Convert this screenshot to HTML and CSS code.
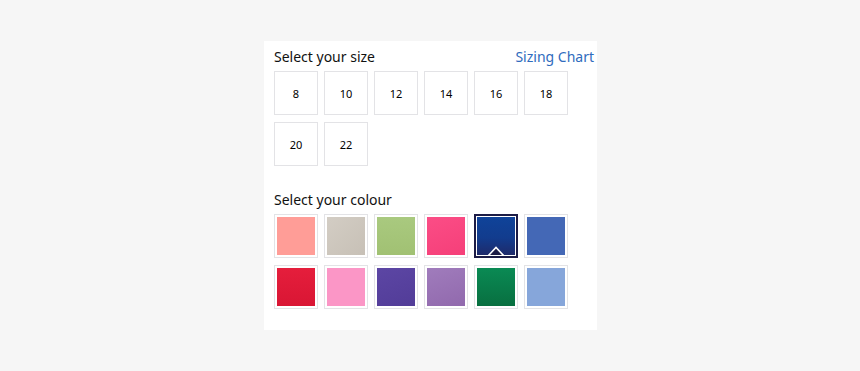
FILE: index.html
```html
<!DOCTYPE html>
<html lang="en">
<head>
  <meta charset="UTF-8" />
  <title>Select size and colour</title>
  <link rel="stylesheet" href="styles.css">
</head>
<body>
  <div class="panel">
    <div class="head">
      <span>Select your size</span>
      <a href="#" class="chart">Sizing Chart</a>
    </div>
    <div class="grid">
      <button class="size">8</button>
      <button class="size">10</button>
      <button class="size">12</button>
      <button class="size">14</button>
      <button class="size">16</button>
      <button class="size">18</button>
      <button class="size">20</button>
      <button class="size">22</button>
    </div>

    <div class="head head-colour">
      <span>Select your colour</span>
    </div>
    <div class="grid">
      <div class="swatch"><div class="fill c-salmon"></div></div>
      <div class="swatch"><div class="fill c-stone"></div></div>
      <div class="swatch"><div class="fill c-lime"></div></div>
      <div class="swatch"><div class="fill c-fuchsia"></div></div>
      <div class="swatch selected">
        <div class="fill c-navy">
          <svg class="notch" width="18" height="10" viewBox="0 0 18 10">
            <path d="M1 10 L9 1.5 L17 10" fill="#1c1c46" stroke="#fff" stroke-width="1.6" />
          </svg>
        </div>
      </div>
      <div class="swatch"><div class="fill c-royal"></div></div>
      <div class="swatch"><div class="fill c-red"></div></div>
      <div class="swatch"><div class="fill c-pink"></div></div>
      <div class="swatch"><div class="fill c-purple"></div></div>
      <div class="swatch"><div class="fill c-lilac"></div></div>
      <div class="swatch"><div class="fill c-green"></div></div>
      <div class="swatch"><div class="fill c-sky"></div></div>
    </div>
  </div>
</body>
</html>
```

FILE: styles.css
```css
body {
  margin: 0;
  background-color: #f6f6f6;
  font-family: 'Noto Sans', sans-serif;
  color: #111;
}
.panel {
  margin: 41px 0 0 264px;
  width: 320px;
  height: 264px;
  padding: 5px 3px 20px 10px;
  background: #fff;
}
.head {
  display: flex;
  justify-content: space-between;
  align-items: center;
  height: 20px;
  font-size: 14px;
  margin-bottom: 5px;
}
.head-colour {
  margin-top: 23px;
}
.chart {
  color: #2f6bbd;
  text-decoration: none;
}
.grid {
  display: grid;
  grid-template-columns: repeat(6, 44px);
  grid-auto-rows: 44px;
  column-gap: 6px;
  row-gap: 7px;
}
.size {
  box-sizing: border-box;
  margin: 0;
  padding: 0;
  background: #fff;
  border: 1px solid #e3e3e6;
  font-family: 'Noto Sans', sans-serif;
  font-size: 11px;
  color: #000;
  cursor: pointer;
}
.swatch {
  box-sizing: border-box;
  border: 1px solid #e3e3e6;
  padding: 2px;
  cursor: pointer;
}
.swatch.selected {
  border: 2px solid #1c1c46;
  padding: 1px;
}
.fill {
  position: relative;
  width: 100%;
  height: 100%;
  overflow: hidden;
}
.notch {
  position: absolute;
  left: 50%;
  bottom: -1px;
  margin-left: -9px;
}
.c-salmon { background: #ff9d97; }
.c-stone { background: linear-gradient(135deg, #d3cdc4, #c7c0b6); }
.c-lime { background: linear-gradient(180deg, #a9c97f, #a1c173); }
.c-fuchsia { background: linear-gradient(160deg, #fb4d86, #f53f79); }
.c-navy { background: linear-gradient(180deg, #0f4399 0%, #123c8e 55%, #1e2a6a 100%); }
.c-royal { background: #4468b6; }
.c-red { background: linear-gradient(180deg, #e51e3c, #d91634); }
.c-pink { background: #fb96c6; }
.c-purple { background: linear-gradient(160deg, #5c46a4, #523c98); }
.c-lilac { background: linear-gradient(160deg, #a07cbc, #9169ad); }
.c-green { background: linear-gradient(180deg, #0a8a54, #086f40); }
.c-sky { background: #86a6da; }
```
